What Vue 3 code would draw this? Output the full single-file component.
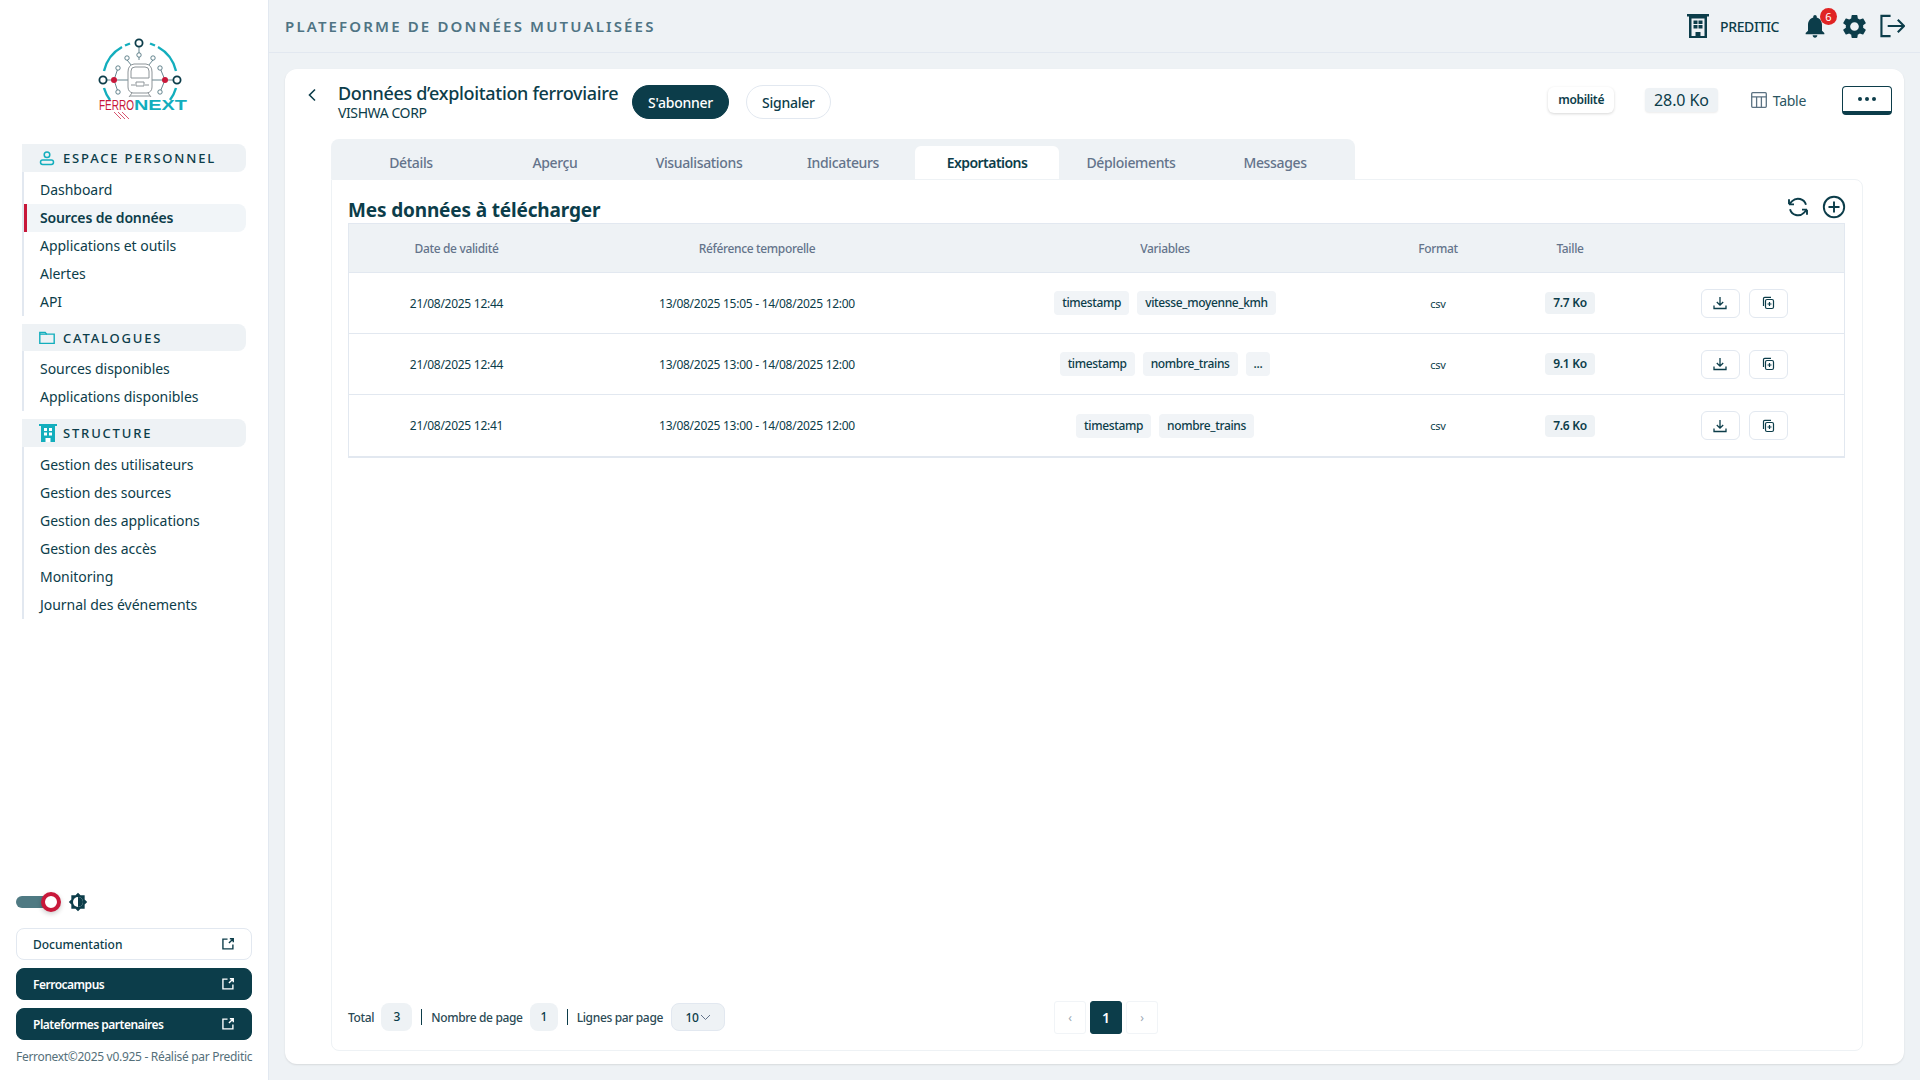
<script setup>
const sections = [
  { title: 'ESPACE PERSONNEL', icon: 'user', items: ['Dashboard', 'Sources de données', 'Applications et outils', 'Alertes', 'API'] },
  { title: 'CATALOGUES', icon: 'folder', items: ['Sources disponibles', 'Applications disponibles'] },
  { title: 'STRUCTURE', icon: 'building', items: ['Gestion des utilisateurs', 'Gestion des sources', 'Gestion des applications', 'Gestion des accès', 'Monitoring', 'Journal des événements'] }
]
const tabs = ['Détails', 'Aperçu', 'Visualisations', 'Indicateurs', 'Exportations', 'Déploiements', 'Messages']
const rows = [
  { date: '21/08/2025 12:44', ref: '13/08/2025 15:05 - 14/08/2025 12:00', vars: ['timestamp', 'vitesse_moyenne_kmh'], size: '7.7 Ko' },
  { date: '21/08/2025 12:44', ref: '13/08/2025 13:00 - 14/08/2025 12:00', vars: ['timestamp', 'nombre_trains', '...'], size: '9.1 Ko' },
  { date: '21/08/2025 12:41', ref: '13/08/2025 13:00 - 14/08/2025 12:00', vars: ['timestamp', 'nombre_trains'], size: '7.6 Ko' }
]
const links = [
  { label: 'Documentation', dark: false },
  { label: 'Ferrocampus', dark: true },
  { label: 'Plateformes partenaires', dark: true }
]
const arcs = ['M24 46A37 37 0 0 1 42 22', 'M45 20.500L50 18.500', 'M70 18.500L75 20.500', 'M78 22A37 37 0 0 1 96 46', 'M24 63A37 37 0 0 0 30 75', 'M96 63A37 37 0 0 1 90 75']
const nodes = [[38, 43], [38, 67], [47, 33], [73, 33], [80, 43], [80, 67]]
</script>

<template>
  <div class="app">
    <aside class="side">
      <div class="side-top">
        <div class="logo">
          <svg width="120" height="100" viewBox="0 0 120 100">
            <g fill="none" stroke="#13aebd" stroke-width="2.4">
              <path v-for="a in arcs" :key="a" :d="a" />
            </g>
            <g fill="none" stroke="#3f6672" stroke-width=".8">
              <path d="M59 22v6M59 32v3M27 55h24M67 55h26M34 55l4-12M34 55l4 12M85 55l-5-12M85 55l-5 12M47 35l5 6M73 35l-5 6" />
            </g>
            <g fill="#fff" stroke="#0c3d4a" stroke-width="1.8">
              <circle cx="59" cy="18" r="3.6" />
              <circle cx="23" cy="55" r="3.6" />
              <circle cx="97" cy="55" r="3.6" />
            </g>
            <circle cx="59" cy="30" r="2.2" fill="#fff" stroke="#3f6672" stroke-width=".8" />
            <circle v-for="n in nodes" :key="n.join()" :cx="n[0]" :cy="n[1]" r="2.2" fill="#fff" stroke="#3f6672" stroke-width=".8" />
            <circle cx="34" cy="55" r="3" fill="#c8183a" />
            <circle cx="85" cy="55" r="3" fill="#c8183a" />
            <g fill="#fff" stroke="#8d9498" stroke-width="1">
              <path d="M48 62V47q0-7 6-8h12q6 1 6 8v15q0 5-5 6H53q-5-1-5-6z" />
              <path d="M51 53V46q0-4 4-4h10q4 0 4 4v7z" fill="none" />
              <path d="M51 60h4M65 60h4M56 57h8v4h-8zM52 68l-3 4M68 68l3 4M50 71h20" fill="none" />
            </g>
            <text x="19" y="85" class="logo-red" textLength="35" lengthAdjust="spacingAndGlyphs">FERRO</text>
            <text x="54" y="85" class="logo-teal" textLength="53" lengthAdjust="spacingAndGlyphs">NEXT</text>
            <path d="M34 87l7 7M38 87l7 7M42 87l7 7" stroke="#d85570" stroke-width="1" fill="none" />
          </svg>
        </div>
        <nav class="nav">
          <section v-for="s in sections" :key="s.title" class="sect">
            <div class="sect-head">
              <span class="sect-icon">
                <svg v-if="s.icon === 'user'" width="16" height="16" viewBox="0 0 16 16" fill="none" stroke="#13aebd" stroke-width="1.5">
                  <circle cx="8" cy="4.800" r="2.800" />
                  <rect x="1.500" y="10" width="13" height="4.500" rx="2.200" />
                </svg>
                <svg v-else-if="s.icon === 'folder'" width="16" height="16" viewBox="0 0 16 16" fill="none" stroke="#13aebd" stroke-width="1.400">
                  <path d="M.8 13.400V2.400h5.400l1.400 1.700h7.600v9.300z" />
                  <path d="M.8 4.100h7" />
                </svg>
                <svg v-else width="18" height="18" viewBox="0 0 18 18">
                  <path d="M0 0h18v2H16v16H2V2H0z" fill="#13aebd" />
                  <path d="M5 4h3v3H5zM10 4h3v3h-3zM5 8.500h3v3H5zM10 8.500h3v3h-3zM6.500 18v-4h5v4z" fill="#fff" />
                </svg>
              </span>
              <span class="sect-title">{{ s.title }}</span>
            </div>
            <ul class="sect-list">
              <li v-for="i in s.items" :key="i" :class="['item', { active: i === 'Sources de données' }]">{{ i }}</li>
            </ul>
          </section>
        </nav>
      </div>
      <div class="side-bottom">
        <div class="theme">
          <span class="toggle"><span class="knob"></span></span>
          <svg width="20" height="20" viewBox="0 0 24 24" class="sun">
            <path fill="#0c3d4a" d="M12 1l3 3h5v5l3 3-3 3v5h-5l-3 3-3-3H4v-5l-3-3 3-3V4h5z" />
            <circle cx="12" cy="12" r="6" fill="#fff" />
            <path fill="#0c3d4a" d="M12 6a6 6 0 0 1 0 12z" />
          </svg>
        </div>
        <a v-for="l in links" :key="l.label" :class="['lnk', { dark: l.dark }]">
          <span>{{ l.label }}</span>
          <svg width="12" height="12" viewBox="0 0 13 13" fill="none" stroke="currentColor" stroke-width="1.500">
            <path d="M6 1.200H1v10.600h10.800V7M7.500 5.500l4.500-4.500M8.500 .8H12.200V4.500" />
          </svg>
        </a>
        <p class="copy">Ferronext©2025 v0.925 - Réalisé par Preditic</p>
      </div>
    </aside>

    <div class="main">
      <header class="top">
        <h1 class="brand">PLATEFORME DE DONNÉES MUTUALISÉES</h1>
        <div class="top-right">
          <svg width="22" height="24" viewBox="0 0 22 24" class="b-ic">
            <path d="M0 0h22v2.500H20V24H2V2.500H0z" fill="#0c3d4a" />
            <path d="M4.500 4.500h13V22h-4v-4h-5v4h-4z" fill="#eef2f5" />
            <path d="M6.500 6.500h4v3.500h-4zM11.500 6.500h4v3.500h-4zM6.500 11h4v3.500h-4zM11.500 11h4v3.500h-4z" fill="#0c3d4a" />
          </svg>
          <span class="org">PREDITIC</span>
          <span class="bell">
            <svg width="28" height="28" viewBox="0 0 24 24"><path fill="#0c3d4a" d="M12 22c1.100 0 2-.9 2-2h-4c0 1.100.9 2 2 2zm6-6v-5c0-3.070-1.630-5.640-4.500-6.320V4c0-.83-.67-1.500-1.500-1.500s-1.500.67-1.500 1.500v.68C7.640 5.360 6 7.920 6 11v5l-2 2v1h16v-1l-2-2z" /></svg>
            <span class="badge">6</span>
          </span>
          <svg width="29" height="29" viewBox="0 0 24 24" class="gear"><path fill="#0c3d4a" d="M19.140 12.940c.04-.3.06-.61.06-.94 0-.32-.02-.64-.07-.94l2.030-1.580c.18-.14.23-.41.12-.61l-1.920-3.320c-.12-.22-.37-.29-.59-.22l-2.390.96c-.5-.38-1.030-.7-1.620-.94l-.36-2.540c-.04-.24-.24-.41-.48-.41h-3.840c-.24 0-.43.17-.47.41l-.36 2.540c-.59.24-1.130.57-1.620.94l-2.390-.96c-.22-.08-.47 0-.59.22L2.740 8.870c-.12.21-.08.47.12.61l2.030 1.580c-.05.3-.09.63-.09.94s.02.64.07.94l-2.030 1.580c-.18.14-.23.41-.12.61l1.920 3.320c.12.22.37.29.59.22l2.390-.96c.5.38 1.030.7 1.620.94l.36 2.540c.05.24.24.41.48.41h3.840c.24 0 .44-.17.47-.41l.36-2.540c.59-.24 1.130-.56 1.620-.94l2.390.96c.22.08.47 0 .59-.22l1.920-3.320c.12-.22.07-.47-.12-.61l-2.010-1.580zM12 15.600c-1.980 0-3.600-1.620-3.600-3.600s1.620-3.600 3.600-3.600 3.600 1.620 3.600 3.600-1.620 3.600-3.600 3.600z" /></svg>
          <svg width="25" height="24" viewBox="0 0 26 24" fill="none" stroke="#0c3d4a" stroke-width="2.200" class="exit"><path d="M11 1.500H1.500v21H11M8 12h17M18.500 5.500l6.500 6.500-6.500 6.500" /></svg>
        </div>
      </header>

      <main class="card">
        <div class="card-head">
          <div class="head-left">
            <svg width="10" height="14" viewBox="0 0 10 14" fill="none" stroke="#0c3d4a" stroke-width="1.600" class="back"><path d="M8 1.500 2.500 7 8 12.500" /></svg>
            <div class="title-box">
              <div class="title">Données d’exploitation ferroviaire</div>
              <div class="subtitle">VISHWA CORP</div>
            </div>
            <button class="pill solid">S'abonner</button>
            <button class="pill">Signaler</button>
          </div>
          <div class="head-right">
            <span class="tag">mobilité</span>
            <span class="weight">28.0 Ko</span>
            <span class="kind">
              <svg width="16" height="16" viewBox="0 0 16 16" fill="none" stroke="#5b7282" stroke-width="1.300"><rect x=".7" y=".7" width="14.600" height="14.600" rx="1" /><path d="M.7 4.800h14.600M5.600 4.800v10.500M10.400 4.800v10.500" /></svg>
              Table
            </span>
            <button class="more"><i></i><i></i><i></i></button>
          </div>
        </div>

        <div class="tabbar">
          <div v-for="t in tabs" :key="t" :class="['tab', { on: t === 'Exportations' }]">{{ t }}</div>
        </div>

        <div class="panel">
          <div class="panel-head">
            <h2 class="panel-title">Mes données à télécharger</h2>
            <div class="panel-tools">
              <svg width="24" height="24" viewBox="0 0 24 24" fill="none" stroke="#0c3d4a" stroke-width="1.900" class="flip"><path d="M16 9.350h5V9.350M3 19.650v-5m0 0h5m-5 0 3.180 3.180a8.250 8.250 0 0 0 13.800-3.700M4.030 9.870a8.250 8.250 0 0 1 13.800-3.700l3.180 3.180m0-5v5" /></svg>
              <svg width="24" height="24" viewBox="0 0 24 24" fill="none" stroke="#0c3d4a" stroke-width="1.900"><circle cx="12" cy="12" r="10.200" /><path d="M12 6.500v11M6.500 12h11" /></svg>
            </div>
          </div>

          <div class="table">
            <div class="tr th">
              <div>Date de validité</div><div>Référence temporelle</div><div>Variables</div><div>Format</div><div>Taille</div><div></div>
            </div>
            <div v-for="(r, idx) in rows" :key="idx" class="tr td">
              <div>{{ r.date }}</div>
              <div>{{ r.ref }}</div>
              <div class="vars"><span v-for="v in r.vars" :key="v" class="var">{{ v }}</span></div>
              <div class="fmt">csv</div>
              <div><span class="size">{{ r.size }}</span></div>
              <div class="acts">
                <button class="act">
                  <svg width="14" height="14" viewBox="0 0 14 14" fill="none" stroke="#0c3d4a" stroke-width="1.300"><path d="M7 1v8M3.800 6 7 9.200 10.200 6M1 9.500v3h12v-3" /></svg>
                </button>
                <button class="act">
                  <svg width="14" height="14" viewBox="0 0 14 14" fill="none" stroke="#0c3d4a" stroke-width="1.200"><path d="M2.500 10V2.500q0-1.200 1.200-1.200H10" /><rect x="4.500" y="3.500" width="8" height="9" rx="1.500" /><path d="M8.500 6v4M6.500 8h4" /></svg>
                </button>
              </div>
            </div>
          </div>

          <div class="pager">
            <div class="pager-left">
              <span>Total</span><span class="num n3">3</span>
              <i class="sep"></i>
              <span>Nombre de page</span><span class="num n1">1</span>
              <i class="sep"></i>
              <span>Lignes par page</span>
              <span class="select">10
                <svg width="11" height="7" viewBox="0 0 11 7" fill="none" stroke="#64748b" stroke-width="1"><path d="M1 1l4.500 4.500L10 1" /></svg>
              </span>
            </div>
            <div class="pages">
              <span class="pg">‹</span><span class="pg cur">1</span><span class="pg">›</span>
            </div>
          </div>
        </div>
      </main>
    </div>
  </div>
</template>

<style>
html, body { margin: 0; background: #eef2f5; }
</style>

<style scoped>
* { box-sizing: border-box; }
.app { width: 1920px; height: 1080px; display: flex; overflow: hidden; background: #eef2f5; font-family: "Noto Sans", sans-serif; color: #0c3d4a; }
.side { width: 269px; background: #fff; border-right: 1px solid #e2e8f0; display: flex; flex-direction: column; justify-content: space-between; flex: none; }
.logo { height: 144px; padding: 25px 0 0 80px; }
.logo svg { display: block; }
.logo-red { font: 400 14px "Liberation Sans", sans-serif; fill: #c8183a; }
.logo-teal { font: 700 14px "Liberation Sans", sans-serif; fill: #13aebd; }
.nav { padding-left: 22px; width: 246px; display: flex; flex-direction: column; gap: 8px; }
.sect-head { height: 28px; background: #eef2f5; border-radius: 0 8px 8px 0; display: flex; align-items: center; padding-left: 17px; }
.sect:nth-child(2) .sect-head { height: 27px; }
.sect-icon { width: 24px; display: flex; align-items: center; }
.sect-title { font-size: 13px; font-weight: 500; letter-spacing: 1.820px; white-space: nowrap; }
.sect-list { margin: 0; padding: 4px 0 0; list-style: none; border-left: 2px solid #e2e8f0; }
.item { height: 28px; line-height: 28px; font-size: 14px; padding-left: 16px; border-radius: 0 8px 8px 0; white-space: nowrap; letter-spacing: -.03px; }
.item.active { font-weight: 600; background: #f1f5f8; border-left: 3px solid #c8183a; padding-left: 13px; letter-spacing: -.15px; }
.side-bottom { padding: 0 16px 14px; display: flex; flex-direction: column; }
.theme { display: flex; align-items: center; height: 24px; margin-bottom: 14px; }
.toggle { position: relative; width: 40px; height: 12px; border-radius: 6px; background: #4f7a83; display: block; }
.knob { position: absolute; right: -5px; top: -4px; width: 20px; height: 20px; border-radius: 50%; background: #fff; border: 4px solid #c8183a; box-shadow: 0 2px 5px rgba(0,0,0,.2); }
.sun { margin-left: 12px; }
.lnk { height: 32px; width: 236px; margin-bottom: 8px; border-radius: 8px; border: 1px solid #e2e8f0; display: flex; align-items: center; justify-content: space-between; padding: 0 17px 0 16px; font-size: 12px; font-weight: 500; background: #fff; }
.lnk.dark { background: #0c3d4a; border-color: #0c3d4a; color: #fff; font-weight: 600; letter-spacing: -.5px; }
.copy { margin: 0; font-size: 12px; line-height: 18px; color: #55707a; white-space: nowrap; letter-spacing: -.3px; }

.main { flex: 1; min-width: 0; display: flex; flex-direction: column; }
.top { height: 53px; flex: none; border-bottom: 1px solid #e2e8f0; display: flex; align-items: center; justify-content: space-between; padding: 0 15px 0 16px; }
.brand { margin: 0; font-size: 15px; font-weight: 600; letter-spacing: 2.150px; color: #4f7484; }
.top-right { display: flex; align-items: center; }
.b-ic { margin-right: 11px; }
.org { font-size: 14px; font-weight: 500; margin-right: 22px; letter-spacing: -.4px; }
.bell { position: relative; display: block; width: 28px; height: 28px; margin-right: 11px; }
.bell svg { display: block; }
.badge { position: absolute; right: -8px; top: -4px; width: 17px; height: 17px; border-radius: 50%; background: #e02424; color: #fff; font-size: 11px; line-height: 17px; text-align: center; }
.gear { margin-right: 11px; }

.card { margin: 16px; height: 995px; background: #fff; border-radius: 12px; box-shadow: 0 1px 2px rgba(0,0,0,.1); padding: 0 41px 13px 46px; display: flex; flex-direction: column; }
.card-head { height: 70px; display: flex; justify-content: space-between; align-items: flex-start; padding-top: 15px; margin-right: -29px; }
.head-left { display: flex; align-items: flex-start; }
.back { margin: 4px 21px 0 -24px; }
.title-box { margin-right: 16px; width: 278px; margin-top: -3px; }
.title { font-size: 18px; line-height: 24px; font-weight: 500; white-space: nowrap; letter-spacing: -.32px; }
.subtitle { font-size: 14px; line-height: 15px; letter-spacing: -.4px; }
.pill { height: 34px; border-radius: 17px; padding: 0 15px; font: 500 14px "Noto Sans", sans-serif; letter-spacing: -.25px; background: #fff; border: 1px solid #e2e8f0; color: #0c3d4a; margin: 1px 17px 0 0; }
.pill.solid { background: #0c3d4a; border-color: #0c3d4a; color: #fff; }
.head-right { display: flex; align-items: center; height: 30px; margin-top: 1px; }
.tag { height: 26px; line-height: 26px; padding: 0 10px; border-radius: 6px; background: #fff; box-shadow: 0 1px 3px rgba(0,0,0,.16); font-size: 12px; font-weight: 600; margin-right: 31px; letter-spacing: -.35px; }
.weight { height: 24px; line-height: 24px; padding: 0 9px; border-radius: 4px; background: #eef2f5; font-size: 16px; margin-right: 33px; box-shadow: 0 1px 2px rgba(0,0,0,.08); letter-spacing: -.1px; }
.kind { display: flex; align-items: center; gap: 6px; font-size: 14px; margin-right: 36px; color: #2b5562; letter-spacing: -.3px; }
.more { width: 50px; height: 29px; border: 1px solid #0c3d4a; border-bottom-width: 4px; border-radius: 4px; background: #fff; display: flex; align-items: center; justify-content: center; gap: 3px; padding: 0; }
.more i { width: 4px; height: 4px; border-radius: 50%; background: #0c3d4a; }
.tabbar { width: 1024px; height: 40px; flex: none; background: #eef2f5; border-radius: 8px 8px 0 0; padding: 7px 8px 0; display: flex; }
.tab { width: 144px; height: 33px; line-height: 33px; text-align: center; font-size: 14px; font-weight: 500; color: #64748b; border-radius: 6px 6px 0 0; letter-spacing: -.35px; }
.tab.on { background: #fff; color: #0c3d4a; font-weight: 600; letter-spacing: -.55px; }
.panel { flex: 1; min-height: 0; border: 1px solid #eef2f5; border-top-width: 1px; border-radius: 0 8px 8px 8px; padding: 0 17px 0 16px; display: flex; flex-direction: column; }
.panel-head { height: 43px; flex: none; display: flex; align-items: flex-end; justify-content: space-between; }
.panel-title { margin: 0 0 -1px; font-size: 19px; line-height: 28px; font-weight: 700; letter-spacing: -.15px; }
.panel-tools { display: flex; gap: 12px; align-self: flex-start; padding-top: 15px; margin-right: -1px; }
.flip { transform: scaleX(-1); }
.table { border: 1px solid #e2e8f0; border-bottom-width: 2px; flex: none; }
.tr { display: grid; grid-template-columns: 215px 386px 430px 116px 148px 200px; align-items: center; text-align: center; font-size: 12px; letter-spacing: -.27px; }
.th { height: 49px; background: #eef2f5; border-bottom: 1px solid #e2e8f0; color: #64748b; font-weight: 500; letter-spacing: -.35px; }
.td { height: 61px; border-bottom: 1px solid #e2e8f0; }
.td:last-child { border-bottom: none; }
.vars { display: flex; justify-content: center; gap: 8px; }
.var { height: 24px; line-height: 24px; padding: 0 8px; background: #f1f4f7; border-radius: 4px; font-weight: 500; letter-spacing: -.35px; }
.fmt { font-size: 11px; }
.size { display: inline-block; height: 22px; line-height: 22px; padding: 0 8px; background: #eef2f5; border-radius: 4px; font-weight: 600; }
.acts { display: flex; justify-content: center; gap: 9px; }
.act { width: 39px; height: 29px; background: #fff; border: 1px solid #e2e8f0; border-radius: 6px; display: flex; align-items: center; justify-content: center; padding: 0; }
.pager { margin-top: auto; height: 47px; flex: none; display: flex; align-items: flex-start; font-size: 12px; color: #2b4a55; }
.pager-left { display: flex; align-items: center; height: 28px; font-weight: 500; white-space: nowrap; letter-spacing: -.35px; width: 381px; }
.num { height: 28px; line-height: 28px; text-align: center; background: #eef2f5; border-radius: 8px; margin-left: 7px; color: #0c3d4a; }
.n3 { width: 31px; }
.n1 { width: 28px; }
.sep { width: 1px; height: 16px; background: #0c3d4a; margin: 0 9px; }
.select { width: 54px; height: 28px; margin-left: 8px; background: #eef2f5; border: 1px solid #e2e8f0; border-radius: 8px; display: flex; align-items: center; justify-content: center; gap: 1px; color: #0c3d4a; }
.pages { display: flex; gap: 4px; margin-left: 325px; margin-top: -2px; }
.pg { width: 32px; height: 33px; line-height: 31px; text-align: center; border: 1px solid #f1f4f7; border-radius: 3px; color: #9aa8b5; font-size: 12px; }
.pg.cur { background: #0c3d4a; border-color: #0c3d4a; color: #fff; font-weight: 600; font-size: 14px; }
</style>
